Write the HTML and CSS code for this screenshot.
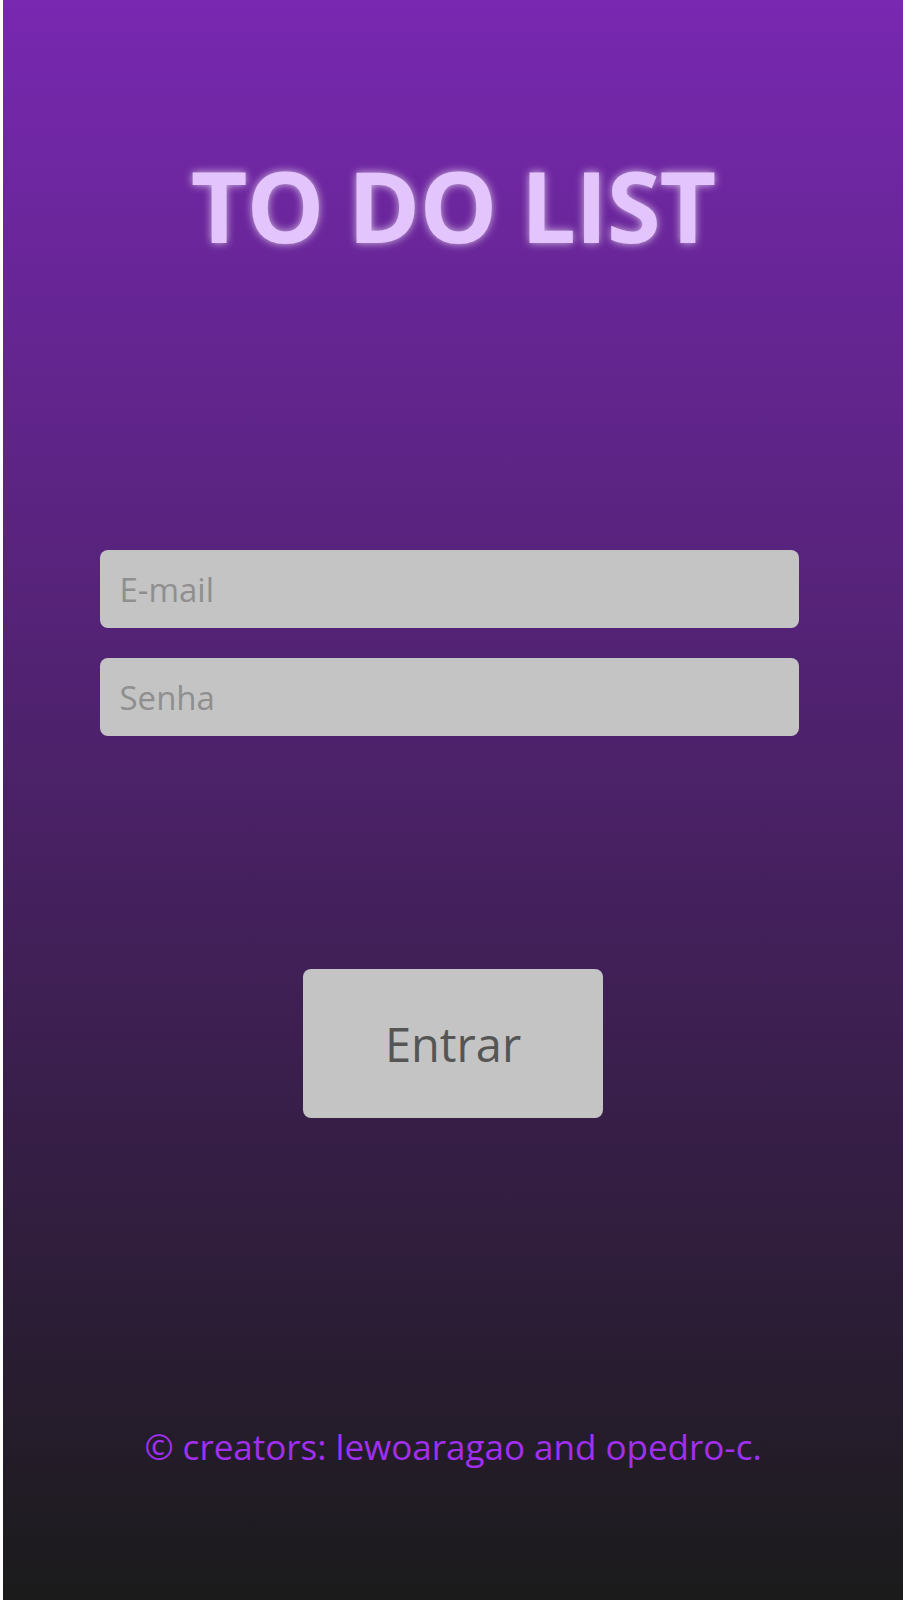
FILE: index.html
```html
<!DOCTYPE html>
<html lang="pt">
<head>
<meta charset="utf-8">
<title>To Do List</title>
<link rel="stylesheet" href="styles.css">
</head>
<body>
<main class="page">
  <h1 class="title">TO DO LIST</h1>
  <form class="login">
    <div class="fields">
      <input class="field" type="email" placeholder="E-mail">
      <input class="field" type="password" placeholder="Senha">
    </div>
    <button class="btn" type="button">Entrar</button>
  </form>
  <footer class="footer">© creators: lewoaragao and opedro-c.</footer>
</main>
</body>
</html>
```
FILE: styles.css
```css
html, body {
  margin: 0;
  padding: 0;
  background: #ffffff;
}
.page {
  margin-left: 3px;
  height: 1600px;
  box-sizing: border-box;
  background: linear-gradient(180deg, #7828b1 0%, #4a2166 50%, #1b1b1b 100%);
  display: flex;
  flex-direction: column;
  align-items: center;
  font-family: "Open Sans", "Noto Sans", sans-serif;
}
.title {
  margin: 150px 0 0 0;
  font-size: 98px;
  line-height: 110px;
  font-weight: 700;
  color: #e3c4fc;
  letter-spacing: -1px;
  text-shadow: 0 0 8px rgba(255, 255, 255, 0.7);
}
.login {
  display: flex;
  flex-direction: column;
  align-items: center;
  margin-top: 290px;
}
.fields {
  display: flex;
  flex-direction: column;
  gap: 30px;
  margin-right: 8px;
}
.field {
  width: 699px;
  height: 78px;
  box-sizing: border-box;
  border: none;
  border-radius: 8px;
  background: #c4c4c4;
  padding: 0 20px;
  font-family: inherit;
  font-size: 33px;
  color: #555;
  outline: none;
}
.field::placeholder {
  color: #8f8f8f;
}
.btn {
  margin-top: 233px;
  width: 300px;
  height: 149px;
  border: none;
  border-radius: 8px;
  background: #c4c4c4;
  color: #555555;
  font-family: inherit;
  font-size: 47px;
}
.footer {
  margin-top: 305px;
  font-size: 35px;
  color: #a22ff0;
}
```
